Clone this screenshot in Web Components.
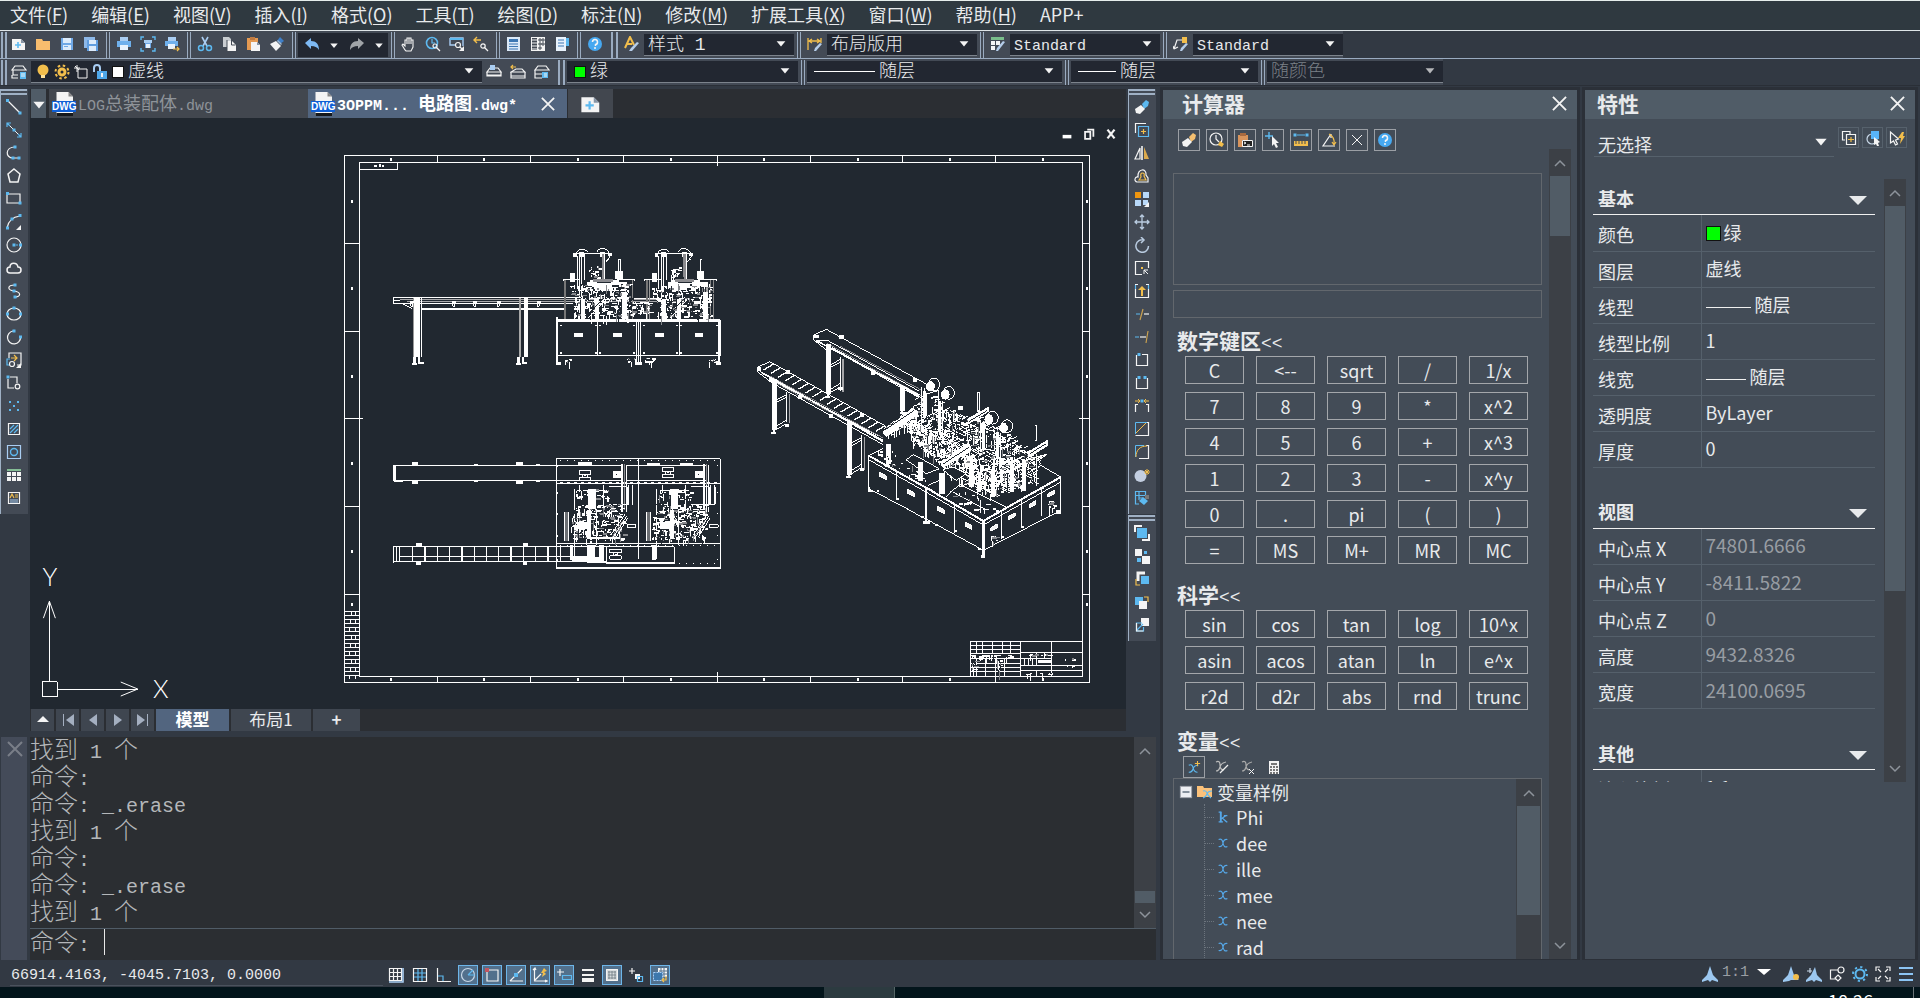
<!DOCTYPE html>
<html lang="zh-CN">
<head>
<meta charset="utf-8">
<title>3OPPM... 电路图.dwg</title>
<style>
html,body{margin:0;height:100%}
body{font-family:"Noto Sans CJK SC","Noto Sans",sans-serif;background:#323943;color:#e8eaec;overflow:hidden}
</style>
</head>
<body>
<cad-app></cad-app>
<script>
const W='#f4f4f4',B='#5db9f0',L='#a9cdf2',Y='#f2be4c',G='#8d939b';
const st=(d,c=W,w=1.2)=>`<path d="${d}" fill="none" stroke="${c}" stroke-width="${w}"/>`;
const fl=(d,c=W)=>`<path d="${d}" fill="${c}"/>`;
const bx=(x,y,w,h,c=W)=>`<rect x="${x}" y="${y}" width="${w}" height="${h}" fill="${c}"/>`;
const ci=(x,y,r,c=W,w=1.2)=>`<circle cx="${x}" cy="${y}" r="${r}" fill="none" stroke="${c}" stroke-width="${w}"/>`;
const dt=(x,y,c=B)=>bx(x-1.5,y-1.5,3,3,c);
const ICONS={
new:fl('M1 3h9l4 4v7H1z')+fl('M10 3v4h4z','#8795a5')+st('M7 6v6M4 9h6',B,1.6),
open:fl('M1 3h6l1 2h7v9H1z','#f8bd6e'),
save:fl('M2 2h12v12H2z','#6fa8e6')+bx(4,2,8,5,'#dcebfb')+bx(4,9,8,5,'#dcebfb')+bx(5,10,4,1,'#6fa8e6'),
saveall:fl('M1 1h11v11H1z','#8db8e8')+fl('M4 4h11v11H4z','#5f9de0')+bx(6,4,7,4,'#dcebfb')+bx(6,10,7,5,'#dcebfb'),
print:bx(4,1,8,4,L)+bx(1,5,14,6,'#6fb0ec')+bx(4,9,8,5,'#e8f2fc'),
preview:st('M1 4V1h3M12 1h3v3M15 12v3h-3M4 15H1v-3',B,1.4)+bx(4,4,8,3,L)+bx(5,7,6,5,'#6fa8e6')+bx(6,8,4,4,'#e8f2fc'),
plot:bx(4,1,8,4,L)+bx(1,5,13,5,'#6fb0ec')+bx(4,8,7,5,'#e8f2fc')+st('M9 13h6M13 11l2 2-2 2',Y),
cut:st('M5 1l5 9M11 1l-5 9',L,1.6)+ci(4,12,2.5,B,1.5)+ci(12,12,2.5,B,1.5),
copy:fl('M2 1h6l2 2v8H2z','#c8ccd0')+fl('M6 5h5l4 4v6H6z')+st('M6 4v11M10.500 5v4h4','#434a55',1),
paste:fl('M2 2h11v12H2z','#e59a52')+bx(5,1,5,3,'#c07a40')+fl('M6 6h6l3 3v6H6z')+fl('M12 6v3h3z','#8795a5'),
brush:fl('M11 1l4 4-4 3-3-3z','#3f7fc8')+fl('M7 5l5 5-5 5-6-7z')+fl('M8 5l4 4 1-1-4-4z','#a0b8d0'),
undo:fl('M1 6l6-5v3c5 0 8 3 8 9-2-3-4-4-8-4v3z','#7db9f4'),
redo:fl('M15 6L9 1v3C4 4 1 7 1 13c2-3 4-4 8-4v3z','#a0a4a8'),
down:fl('M3 6h10l-5 6z'),
up:fl('M2 10h12L8 4z'),
hand:st('M4 14L1 9l1-1 2 2V4h2v4V2h2v6V2h2v6V4h2v7l-2 4H5z',W,1.1),
zoomrt:ci(7,7,5.5,B,1.6)+st('M7 3v4h3',B)+ci(10,10,2,W)+st('M11 11l4 4'),
zoomwin:st('M1 2h13v8M1 2v7h5',L,1.4)+st('M1 3h13',B,2)+ci(9,9,2.5)+st('M11 11l2 2')+fl('M15 10v5h-5z'),
zoomprev:st('M1 4h7M4 1L1 4l3 3',Y,1.4)+ci(10,10,2.2)+st('M11 11l4 4'),
calc:bx(1,1,13,14,'#dbe9f7')+bx(3,3,9,3,'#3c77b3')+st('M3 8h9M3 10.500h9M3 13h9','#3c77b3',1.2),
design:bx(1,1,14,14)+bx(2,2,5,12,'#434a55')+st('M2 4h5M2 7h5M2 10h5M2 13h5',W,1)+st('M9 3h2v2H9zM12 3h2v2h-2zM9 7h2v2H9zM12 7h2v2h-2zM9 11h2v2H9z','#434a55',1),
props:bx(2,1,10,14,'#e8f2fc')+st('M4 4h6M4 7h6M4 10h6','#3c77b3',1.2)+bx(12,2,3,8,B),
help:`<circle cx="8" cy="8" r="7" fill="#46a8f0"/>`+st('M5.500 6a2.500 2.500 0 1 1 3 2.500V10M8 11v2',W,1.5),
tstyle:st('M1 12L6 1l4 8M3 8h5',Y,2)+fl('M15 7l-7 8H5l2-3 6-6z','#b5cdea'),
dstyle:st('M1 2v12M14 2v5M2 5h11M5 3L2 5l3 2M10 3l3 2-3 2',Y,1.3)+fl('M15 8l-6 7H7l1-3 5-5z','#b5cdea'),
tbstyle:bx(1,1,13,3,'#79bd8b')+bx(1,5,4,4)+bx(6,5,4,4)+bx(1,10,4,4)+fl('M15 6l-7 9H6l1-3 6-7z','#b5cdea'),
mlstyle:st('M1 13l3-9h5M1 13l-1-3M1 13l4-2')+bx(9,1,5,6,Y)+fl('M15 8l-6 7H7l1-3 5-5z','#b5cdea'),
layers:st('M4 2h8l3 4H1zM2 6v5h5M1 11v3h6')+bx(9,8,6,7,B)+st('M10 10h4M10 12h4',W,1),
layprev:st('M4 4h8l3 4H1zM1 8v4h14V8M1 11h14')+bx(4,1,5,5,L),
laymake:st('M6 5h6l3 3H1zM1 8v4h14V8M1 12v2h14v-2')+st('M1 3h5M3 1L1 3l2 2',Y),
laystate:st('M4 2h8l3 4H1zM1 6v4h7M1 10v4h7')+bx(8,8,6,6,B)+st('M10 10h3M10 12h3',W,1),
bulb:`<circle cx="8" cy="6" r="5.500" fill="${Y}"/>`+bx(6,11,4,3,'#ffe39a'),
sun:ci(8,8,3,Y,3)+`<circle cx="8" cy="8" r="6.500" fill="none" stroke="${Y}" stroke-width="2" stroke-dasharray="2.500 2.600"/>`,
vpf:st('M5 5h9v9H5zM4 1v7M1 4h6M2 2l4 4',W,1),
lock:st('M2 8V4a3 3 0 0 1 6 0v3',L,2)+bx(5,7,10,8,'#4fa8ea')+bx(9,9,2,4),
line:st('M2 2l12 12')+dt(1.5,1.5)+dt(14,14),
xline:st('M2 2l12 12',W,1)+dt(8,8)+st('M1 5V1h4M15 11v4h-4M1 1l3 3M15 15l-3-3',B),
pline:st('M9 2C-1 2-1 13 7 13h7')+dt(9,2)+dt(7,13)+dt(13,13),
polygon:st('M8 1l6 5-2 8H4L2 6z',W,1.5),
rect:st('M1 3h13v9H1z')+dt(1.5,2.5)+dt(14,12),
arc:st('M1 14C2 8 6 3 14 2')+dt(1.5,14)+dt(6,5)+dt(14,1.5)+fl('M15 11v5h-5z'),
circle:ci(8,8,7)+dt(8,8)+bx(10,7.5,2,1,B)+dt(14.5,8),
cloud:st('M4 13a3 3 0 0 1 0-6c0-5 7-5 8 0a3 3 0 0 1 0 6z',W,1.5),
spline:st('M9 2C1 2 1 7 8 8s8 6 0 6')+dt(9,2)+dt(8,8)+dt(9,14),
ellipse:`<ellipse cx="8" cy="8" rx="7" ry="6" fill="none" stroke="${W}" stroke-width="1.200"/>`+dt(8,2)+dt(1.5,8)+dt(14.5,8),
ellarc:st('M7 2a6.500 6.500 0 1 0 7.500 6')+dt(8,2)+dt(14.5,8),
insert:st('M3 6V1h12v12h-4')+st('M5 6h6M8 3l3 3-3 3',Y)+st('M4 7H1v6h3',B)+ci(6,12,2.5)+fl('M15 11v5h-5z'),
block:st('M4 2h7v6M2 4v9h6')+dt(2,2)+ci(11.5,11.5,2.3),
points:bx(3,3,2,2,B)+bx(11,3,2,2,B)+bx(7,7,2,2,B)+bx(3,11,2,2,B)+bx(11,11,2,2,B),
hatch:st('M2.500 2.500h11v11h-11z')+st('M4 8l4-4M4 12l8-8M8 12l4-4',B,1.2),
region:st('M1.500 1.500h13v13h-13z',L,1.2)+ci(8,8,3.5,B,1.4),
table:bx(1,2,14,2,'#85bd95')+[1,6,11].map(x=>bx(x,5,4,4)+bx(x,10,4,4)).join(''),
mtext:st('M2.500 2.500h11v11h-11z')+st('M4 8l2-4 2 4M9 5h3M9 7h3',Y)+st('M4 10h8M4 12h8',L,1),
erase:fl('M8 5l4-4 3 2-1 4-4 3z',B)+fl('M7 6l4 4-5 5-4-1-1-4z'),
eraseY:fl('M8 5l4-4 3 2-1 4-4 3z','#f4bf70')+fl('M7 6l4 4-5 5-4-1-1-4z'),
copyobj:st('M1.500 11V1.500H12')+st('M4.500 4.500h10v10h-10z',B)+st('M9.500 7v5M7 9.500h5',Y),
mirror:st('M6 3L1 14h5z')+st('M8 1v14',W,1.6)+fl('M10 2l5 12h-5z','#dba94d'),
offset:st('M3 14a2.500 2.500 0 0 1 1-5C3 0 13 0 12 7l2 3v4z')+st('M5 12l2-3q-1-4 1.500-4T10 8l2 4z',Y),
array:bx(1,1,6,6,'#f0960f')+bx(9,1,6,6,'#b8d8f8')+bx(1,9,6,6,'#b8d8f8')+bx(9,9,5,5,'#b8d8f8')+fl('M15 11v5h-5z'),
move:st('M8 1v14M1 8h14M6 3l2-2 2 2M6 13l2 2 2-2M3 6L1 8l2 2M13 6l2 2-2 2','#b9cbe0',1.3),
rotate:st('M10 3a6.300 6.300 0 1 0 4.500 6M7 0l3 3-3 3','#b9cbe0',1.5),
scale:st('M14.500 8V1.500h-13v13H8')+bx(7,7,2,2,Y)+st('M10 10l4 4M14 10h-4v4',W,1),
stretch:st('M1.500 6v8.500h13V6M1 1.500h3M12 1.500h3')+st('M1.500 2v4M14.500 2v4',B)+fl('M8 3l4 4H9v6H7V7H4z',Y),
trim:st('M9 3L6 14','#c8a050',1.2)+st('M10 8h5')+st('M2 8h4',B,1),
extend:st('M14 2l-2 12','#c8a050',1.2)+st('M6 8h6')+st('M1 8h4',B,1),
brkpt:st('M2.500 3v10.500h11V2.500H8')+dt(5,2.5),
brk:st('M2.500 3v10.500h11V3')+dt(5,2.5)+dt(11,2.5),
join:st('M1.500 14V6.500H4M14.500 14V6.500H12')+st('M1 3h5M4 1l2 2-2 2M15 3h-5M12 1l-2 2 2 2',Y,1)+dt(8,3),
chamfer:st('M1.500 14.500h13V1.500H12')+st('M1.500 13V1.500H13',B,1)+st('M2 12L12 2',Y,1),
fillet:st('M5 14.500h9.500V1.500H12')+st('M1.500 13V1.500H10',B,1)+st('M2 13C2 6 6 2 13 2',Y,1),
explode:`<circle cx="6.500" cy="9" r="6" fill="#c3cee0"/>`+st('M13 2v6M10 5h6M11 3l4 4M15 3l-4 4',Y,1),
match:st('M1.500 1.500h10v4h-10zM1.500 5v9H5M5 1v9M5 8h4',B)+fl('M9 7l5 4-4 4-5-4z',B)+bx(11,5,4,4,'#777'),
front:st('M1 7V1h7M15 9v6H8',W,2)+bx(3,3,10,10,B),
back:bx(1,1,7,7)+bx(8,8,8,8)+bx(10,3,3,3,B)+bx(3,10,4,4,B),
above:st('M4 10V2h7',W,3)+bx(7,5,8,8,B)+st('M2 8v6h4',Y),
below:bx(1,3,8,8,B)+bx(5,7,8,8)+st('M10 3h4v5',Y),
hatchb:bx(7,1,8,8)+st('M8 6H2.500v8h7v-4M3 13l6-6',B)+st('M2.500 6v8h7',W),
clock:ci(7,7,6)+st('M7 3v4l3 3')+fl('M11 9l4 3-2 3-4-2z',Y),
pastecmd:fl('M1 3h10v12H1z','#d8945c')+bx(3,1,6,3,'#a86a40')+bx(5,8,11,6,'#222')+st('M5.500 8.500h10v6h-10zM7 10l2 1-2 1M10 13h3',W,1),
pick:st('M4 0v7M0 4h8',B,1.4)+fl('M7 4l7 7H11l2 4-2 1-2-4-2 2z'),
ruler:bx(1,9,14,5,Y)+st('M3 9v3M6 9v3M9 9v3M12 9v3','#434a55',1)+dt(2,3)+dt(14,3)+st('M4 3h8',B,1),
angle:st('M10 2L2 14h12M10 2v4')+st('M8 2q6 3 5 10M11 10l2 3 2-3',Y),
cross:st('M3 3l10 10M13 3L3 13',W,1),
varnew:st('M2 6q4-2 5 3t5 5M13 6q-5 0-6 4t-5 4',B,1.3)+st('M12 1v6M9 4h6',Y),
varedit:st('M2 3q4-2 4 3t4 5M12 3Q7 4 6 8t-4 4','#bbb')+st('M14 6l-8 8','#eee'),
vardel:st('M2 3q4-2 4 3t4 5M12 3Q7 4 6 8t-4 4','#aaa')+st('M9 10l5 5M14 10l-5 5',W,1),
vcalc:bx(3,2,10,13)+bx(5,4,6,2,'#777')+[5,8,11].map(y=>bx(4,y+2,2,2,'#777')+bx(7,y+2,2,2,'#777')+bx(10,y+2,2,2,'#777')).join(''),
folder:fl('M0 2h6l1 2h8v9H0z','#fbc17a')+st('M6 7q3-1 4 2t4 5M15 7q-4 0-5 3t-4 4',B,1.2),
vx:st('M3 4q4-2 5 4t5 4M13 4Q9 3 8 8t-5 4','#56a8e8',1.3),
vk:st('M5.500 2v12','#56a8e8',2.2)+st('M3 13.500h5M3 2.500h3M12 6l-6 4M7 9l5 4.500h1M9 6.500h4','#56a8e8',1.5),
minus:`<rect x="1.500" y="1.500" width="13" height="13" fill="#eceef2" stroke="#9a9ea6"/>`+st('M4 8h8','#456',1.4),
chup:st('M3 11l5-5 5 5',G,1.5), chdn:st('M3 5l5 5 5-5',G,1.5),
close:st('M1 1l14 14M15 1L1 15',W,2),
dwg:fl('M3 0h8l3 3v13H3z')+bx(3,14,11,2,'#15181c')+fl('M11 0v3h3z','#888'),
first:fl('M14 2v12L6 8z','#a4afc0')+bx(3,2,1,12,'#a4afc0'), prev:fl('M12 2v12L4 8z','#a4afc0'),
next:fl('M4 2v12l8-6z','#a4afc0'), last:fl('M2 2v12l8-6z','#a4afc0')+bx(12,2,1,12,'#a4afc0'),
min:bx(3,9,10,4,'#fff'), restore:st('M6 3h7v8M3.500 5.500h6v8h-6z',W,2), x:st('M4 3l8 10M12 3L4 13',W,2.6),
snap:st('M1.500 1.500h12v12h-12zM5.500 1v13M9.500 1v13M1 5.500h13M1 9.500h13')+st('M15 1v14H1',L,1.6),
grid:st('M1.500 1.500h13v13h-13z')+st('M6 2v12M10 2v12M2 6h12M2 10h12',B),
ortho:st('M1.500 1v13.500H15')+st('M2 9h5v5',B),
polar:ci(8,8,6.500,'#c8d8e8')+st('M8 8h7M8 8l5-5',B),
osnap:st('M3 3h11v11H3z')+bx(1,1,4,4,'#c25560'),
otrack:st('M2 14h13M2 14L14 2')+bx(6,6,4,4,B),
dyn:st('M2.500 1v13H15M1 3l2-2 1 2M13 13l2 1-2 1M3 13l6-6')+fl('M12 1l3 3-3 1 2 2-4 3 1-4H9z',Y),
dynin:st('M4 2v7M1 5h7')+st('M6.500 8.500h9v4h-9z',B),
lwt:bx(2,2,12,2)+bx(2,7,12,2)+bx(2,11,12,4),
trans:bx(2,2,12,12,'#d8dcde')+st('M2.500 2.500h11v11h-11z',W,1)+st('M4 5h8M4 8h8M4 11h8M5 4v8M8 4v8M11 4v8','#6d7880',.8),
cycle:st('M4 1v6M1 4h6')+bx(7,7,5,5)+st('M9.500 9.500h5v5h-5z',B),
quick:bx(6,1,9,9)+st('M7 4h8M7 7h8M9 1v9M12 1v9','#52708c',1)+bx(1,5,10,9,'#3d78ad')+`<rect x="1.500" y="5.500" width="9" height="8" fill="none" stroke="${L}" stroke-dasharray="2 1"/>`+st('M14 9v4h-4M12 11l-2 2 2 2',Y),
ann:fl('M8 0l3 9 5 5v2l-6-2-2 2-2-2-6 2v-2l5-5z','#9cc8f0'),
annv:fl('M8 0l3 9 5 5-8 0-2 1-6 1v-2l5-5z','#9cc8f0')+`<circle cx="13" cy="11" r="3" fill="${Y}"/>`,
anna:fl('M9 1l2 8 5 5v2l-6-2-2 2-2-2-6 2v-2l5-5z','#9cc8f0')+st('M1 5h5M4 2v5','#c8d8e8'),
work:st('M9 4H1.500v9H7')+ci(12,4,3)+st('M9 9l3 3-3 3-3-3z'),
gear:ci(8,8,4.500,B,2)+`<circle cx="8" cy="8" r="7" fill="none" stroke="${B}" stroke-width="2" stroke-dasharray="2.200 3.300"/>`,
full:st('M1 5V1h4M11 1h4v4M15 11v4h-4M5 15H1v-4M3 3l3 3M13 3l-3 3M3 13l3-3M13 13l-3-3'),
burger:bx(1,1,14,2,'#8cc4f4')+bx(1,7,14,2,'#8cc4f4')+bx(1,13,14,2,'#8cc4f4'),
qsel:st('M9 5V1.500H1.500V10H4')+st('M5.500 4.500h9v10h-9z')+st('M10 7v5M7 9.500h6',Y),
psel:ci(7,9,5,'#c8d8e8')+bx(6,1,8,8,'#58b4fa')+fl('M9 7l6 5-2 1 1 3h-2l-1-2-2 1z'),
tog:st('M1.500 2v11l3-2 2 4 2-1-2-4 3-1z')+fl('M13 2l2 0-1 4h2l-5 8 1-6H9z',Y)
};
const define=(name,css,html)=>customElements.define(name,class extends HTMLElement{
  connectedCallback(){
    if(this.shadowRoot)return;
    this.attachShadow({mode:'open'}).innerHTML=`<style>*{box-sizing:border-box}button,select,input{font:inherit;color:inherit;background:none;border:0;padding:0;margin:0;border-radius:0;outline:0}a{color:inherit;text-decoration:none}${css}</style>${typeof html==='function'?html(this):html}`;
  }
});
/* Half-width runs are set smaller so that two of them fill one ideograph. */
const mix=t=>t.replace(/[\x20-\x7e]+/g,m=>`<span class="m">${m.replace('<','&lt;')}</span>`);
const ic=(n,s=16)=>`<cad-icon name="${n}" size="${s}"></cad-icon>`;
const tb=(n,l)=>`<tool-button label="${l}">${ic(n)}</tool-button>`;

define('cad-icon',':host{display:inline-flex;flex:none}svg{display:block}',e=>{
  const s=e.getAttribute('size')||16;
  return `<svg width="${s}" height="${s}" viewBox="0 0 16 16" aria-hidden="true">${ICONS[e.getAttribute('name')]}</svg>`;
});
define('tool-button',`:host{display:flex;width:24px;height:23px}
button{flex:1;display:flex;align-items:center;justify-content:center}
:host([on]) button{background:#52708c;border:1px solid #6db6ea}`,
e=>`<button aria-label="${e.getAttribute('label')}"><slot></slot></button>`);
define('bar-sep',`:host{display:block;width:9px;align-self:stretch;flex:none;padding:1px 0 0 3px}
i{display:block;width:4px;height:100%;border:solid #9aabc0;border-width:0 1px}
:host([big]){width:13px;padding-left:4px}:host([big]) i{width:7px;border-width:0 2px}
:host([start]){width:7px;padding-left:1px}:host([start]) i{width:6px;border-width:0 2px}`,'<i></i>');
define('scroll-bar',`:host{display:flex;flex-direction:column;width:22px;background:#3c4046;flex:none;align-items:center}
div{flex:1;width:100%;display:flex;flex-direction:column;padding:0 1px;min-height:0}
i{display:block;background:#515c66;flex:0 0 var(--thumb)}b{flex:0 0 var(--before,0px)}
button{height:27px;width:100%;display:flex;align-items:center;justify-content:center;flex:none}`,
`<button aria-label="向上">${ic('chup')}</button><div><b></b><i></i></div><button aria-label="向下">${ic('chdn')}</button>`);
define('combo-box',`:host{display:flex;align-items:center;height:22px;background:#222731;border-bottom:1px solid #7c838c;font-size:18px;line-height:20px;position:relative;flex:none}
select{appearance:none;flex:1;min-width:0;height:21px;line-height:21px;font-family:"Liberation Mono","Noto Sans CJK SC",monospace;font-weight:300;padding:1px 0 0 4px}
:host([latin]) select{font-size:15px;padding-top:2px}:host([dim]) select{color:#7b8087}:host([dim]) cad-icon{opacity:.7}
option{background:#222731}
.a{position:absolute;right:6px;top:2px;pointer-events:none;line-height:0}`,
e=>`<slot></slot><select aria-label="${e.getAttribute('label')}"><option>${e.getAttribute('value')}</option></select><span class="a">${ic('down',14)}</span>`);

define('menu-bar',`:host{display:block;background:#2f3940;border-top:1px solid #e6eeec;border-bottom:1px solid #dfe5e8}
nav{display:flex;gap:23px;height:29px;padding:0 0 3px 10px;align-items:center;font-size:18px;line-height:26px}
a{white-space:nowrap}u{text-underline-offset:2px}`,
`<nav>${['文件(F)','编辑(E)','视图(V)','插入(I)','格式(O)','工具(T)','绘图(D)','标注(N)','修改(M)','扩展工具(X)','窗口(W)','帮助(H)','APP+'].map(t=>`<a href="#">${t.replace(/\((.)\)/,'(<u>$1</u>)')}</a>`).join('')}</nav>`);

const combo=(l,v,extra='',slot='')=>`<combo-box label="${l}" value="${v}" ${extra}>${slot}</combo-box>`;
define('std-toolbars',`:host{display:block}
.r{display:flex;align-items:center;width:max-content;background:#434a55}
.o{background:#323943}.one{border-bottom:1px solid #9aabc0}
.one .r{height:27px}.two .r{height:26px}
.u{display:flex;background:#222731;width:90px;height:24px;align-items:center}
.u tool-button{width:27px}.u .d{width:18px}
.one tool-button{height:21px;margin-bottom:2px}.u tool-button{margin:0}
.one combo-box{width:150px}.sw{width:12px;height:12px;border:1px solid #111;flex:none}
.ln{height:1px;background:#fff;flex:none;margin-left:7px}
.ly{width:451px}.ly cad-icon{margin-left:3px}.ly cad-icon:first-child{margin-left:4px}
.cl{width:231px}.lt{width:255px}.lw{width:187px}.ps{width:176px}`,
`<div class="o one"><div class="r"><bar-sep start></bar-sep>${tb('new','新建')+tb('open','打开')+tb('save','保存')+tb('saveall','全部保存')}<bar-sep></bar-sep>${tb('print','打印')+tb('preview','预览')+tb('plot','发布')}<bar-sep></bar-sep>${tb('cut','剪切')+tb('copy','复制')+tb('paste','粘贴')+tb('brush','格式刷')}<bar-sep></bar-sep><div class="u">${tb('undo','放弃')}<tool-button class="d" label="放弃列表">${ic('down',12)}</tool-button>${tb('redo','重做')}<tool-button class="d" label="重做列表">${ic('down',12)}</tool-button></div><bar-sep></bar-sep>${tb('hand','平移')+tb('zoomrt','实时缩放')+tb('zoomwin','窗口缩放')+tb('zoomprev','缩放上一个')}<bar-sep></bar-sep>${tb('calc','计算器')+tb('design','设计中心')+tb('props','特性')}<bar-sep></bar-sep>${tb('help','帮助')}<bar-sep big></bar-sep>${tb('tstyle','文字样式')+combo('文字样式','样式 1')}<bar-sep></bar-sep>${tb('dstyle','标注样式')+combo('标注样式','布局版用')}<bar-sep></bar-sep>${tb('tbstyle','表格样式')+combo('表格样式','Standard','latin')}<bar-sep></bar-sep>${tb('mlstyle','引线样式')+combo('引线样式','Standard','latin')}</div></div>
<div class="o two"><div class="r"><bar-sep start></bar-sep>${tb('layers','图层特性')}${combo('图层','虚线','class="ly"',ic('bulb')+ic('sun')+ic('vpf')+ic('lock')+'<span class="sw" style="background:#fff;margin-left:4px"></span>')}${tb('layprev','图层置为当前')+tb('laymake','上一图层')+tb('laystate','图层状态')}<bar-sep big></bar-sep>${combo('颜色','绿','class="cl"','<span class="sw" style="background:#0f0;margin-left:7px"></span>')}<bar-sep></bar-sep>${combo('线型','随层','class="lt"','<span class="ln" style="width:61px"></span>')}<bar-sep></bar-sep>${combo('线宽','随层','class="lw"','<span class="ln" style="width:38px"></span>')}<bar-sep></bar-sep>${combo('打印样式','随颜色','class="ps" dim')}</div></div>`);

define('side-bar',`:host{display:block;width:28px;flex:none}
section{background:#434a55;border-left:1px solid #9fb0c4;padding-bottom:5px;margin-bottom:1px}
.g{height:6px;border:solid #9fb0c4;border-width:2px 0;margin-right:1px}
tool-button{width:25px}`,
e=>e.getAttribute('sets').split('|').map(s=>`<section><div class="g"></div>${s.split(' ').map(n=>tb(n,n)).join('')}</section>`).join(''));

define('doc-tabs',`:host{display:flex;height:29px;background:#2b2e33;padding-left:1px;font-size:18px;line-height:26px}
.m{font-family:"Liberation Mono",monospace;font-size:15px;white-space:pre}
.l{width:15px;background:#505c67;margin-right:3px;display:flex;align-items:center;justify-content:center}
.t{width:259px;background:#42474f;color:#8e9399;display:flex;align-items:center;padding-left:3px}
.t>span:last-of-type{height:30px}
.t.on{background:#52657f;color:#fff;font-weight:700}.n{width:45px;background:#42474f;margin-left:1px;display:flex;align-items:center;justify-content:center}
.d{position:relative;display:flex;width:24px;margin-right:2px;justify-content:center}
.d b{position:absolute;left:0;right:0;top:9px;height:11px;background:#0f5fd6;color:#fff;font:700 10px/11px "Liberation Sans",sans-serif;text-align:center}
.c{margin-left:auto;width:38px;height:27px;display:flex;align-items:center;justify-content:center}`,
`<button class="l" aria-label="文档列表">${ic('down',18)}</button>
<div class="t"><span class="d">${ic('dwg',24)}<b>DWG</b></span><span>${mix('LOG总装配体.dwg')}</span></div>
<div class="t on"><span class="d">${ic('dwg',24)}<b>DWG</b></span><span>${mix('3OPPM... 电路图.dwg*')}</span><button class="c" aria-label="关闭">${ic('close',14)}</button></div>
<button class="n" aria-label="新建">${ic('new',22)}</button>`);

/* ---- drawing ---- */
function rng(s){return()=>(s=(s*1664525+1013904223)>>>0)/4294967296}
function inside(p,x,y){let r=false;for(let i=0,j=p.length-1;i<p.length;j=i++){const[a,b]=p[i],[c,d]=p[j];if((b>y)!=(d>y)&&x<(c-a)*(y-b)/(d-b)+a)r=!r}return r}
const box=(x,y,w,h)=>[[x,y],[x+w,y],[x+w,y+h],[x,y+h]];
/* Scatter of small machine parts within a polygon, on a 3-unit grid. */
function parts(seed,poly,n,iso){
  const r=rng(seed),xs=poly.map(p=>p[0]),ys=poly.map(p=>p[1]),x0=Math.min(...xs),x1=Math.max(...xs),y0=Math.min(...ys),y1=Math.max(...ys);
  const out={w:'',g:'',k:'',s:''};let c=0,guard=0;
  while(c<n&&guard++<n*20){
    const x=Math.round((x0+r()*(x1-x0))/3)*3,y=Math.round((y0+r()*(y1-y0))/3)*3;
    if(!inside(poly,x,y))continue;c++;
    const k=r(),v=r();
    if(iso&&v<.4){const l=6+r()*20,u=r()<.5?.55:-.5;out.s+=`M${x} ${y}l${l|0} ${(l*u)|0}`;continue}
    const w=3*(1+(r()*(v<.7?5:1)|0)),h=3*(1+(r()*(v<.7?2:9)|0));
    out[k<.66?'w':k<.8?'g':'k']+=`M${x} ${y}h${w}v${h}h${-w}z`;
  }
  return `<path d="${out.s}"/><path d="${out.w}" fill="#fff" stroke="none"/><path d="${out.g}" fill="#85878b" stroke="none"/><path d="${out.k}" fill="#212830" stroke="none"/>`;
}
const R=(x,y,w,h,c='#fff')=>`<rect x="${x}" y="${y}" width="${w}" height="${h}" fill="${c}" stroke="none"/>`;
const P=(d,c='')=>`<path d="${d}"${c?` stroke="${c}"`:''}/>`;
function front(){
  let o=P('M160 455H722M180 474H700M160 455V474L185 474L215 488M160 463H180')+R(245,486,427,6)+P('M180 461H950M200 468H950','#a8a8ab')+P('M720 458H950');
  for(const[x,f]of[[218,0],[530,1]]){o+=R(x,458,2,176,'#999')+R(f?x+22:x+4,458,f?12:16,176)+R(x+25,458,3,176)+(f?R(x+8,458,6,176,'#a8a8a8'):'')+R(x+1,634,9,22)+R(x+16,634,6,20)+R(x-3,652,15,7)+R(x+20,650,12,6)}
  for(const x of[210,335,398,470,590])o+=R(x,466,12,6)+P(`M${x+2} 476v6h6v-6`);
  o+=P('M650 524H1141V631H650z')+R(648,520,494,8)+R(648,513,7,144)+R(1135,524,7,130)+P('M772 526V631M889 526V650M895 526V650M901 526V650M1018 526V631');
  for(const x of[702,819,945,1065])o+=R(x,561,26,12);
  for(const x of[660,764,776,880,908,1010,1022,1128])o+=R(x,538,6,4)+R(x,618,6,8);
  for(const x of[648,884,892,1129])o+=R(x,648,14,9);
  for(const x of[670,858,915,1103])o+=parts(x,box(x,634,20,14),26);
  for(const d of[0,245]){
    const s=d+9;
    o+=`<g transform="translate(${d} 0)">`+R(672,400,6,121,'#777')+R(683,400,2,121,'#999')+R(866,400,2,121,'#888')+R(876,400,3,121,'#888')+R(855,410,4,112,'#aaa')
    +P('M703 322H808M707 330A20 20 0 0 1 744 320M770 320A20 20 0 0 1 808 330')+R(700,322,10,12)+R(717,318,15,16)+R(781,318,15,16)+R(803,323,13,8)
    +P('M712 330V430M720 330V521M726 330V440M735 325V404M795 330V425')+R(786,325,7,100,'#8b8b8f')+P('M797 350L810 332M800 345L808 340')
    +parts(s+1,box(745,360,30,35),22)+R(835,340,8,62)+R(838,343,3,56,'#212830')+R(826,375,22,26)
    +R(690,382,16,26)+P('M670 402H720M670 399V406M830 402H884M884 399V406M836 380V400')
    +R(750,402,86,34)+R(740,410,120,14)+R(760,400,58,10,'#8b8b8f')+R(770,408,42,3,'#212830')
    +parts(s+2,box(690,412,180,48),170)+parts(s+3,box(700,455,170,58),180)
    +R(722,460,12,60)+R(766,460,12,60)+R(846,440,14,80)+P('M738 512L790 458','#212830')+P('M744 518L796 464')+`</g>`;
  }
  return o+parts(31,box(870,466,60,36),50);
}
function plan(){
  let o=P('M160 961H850M170 1006H850M160 958V1008')+R(160,958,8,51)+R(160,1004,28,6)+R(160,958,24,5);
  for(const x of[214,528])o+=R(x,950,20,10)+R(x,1008,20,8);
  for(const x of[400,588])o+=R(x,956,12,5)+R(x,1006,12,5);
  o+=P('M158 1204H800M158 1249H800M160 1202V1252M168 1204V1249M178 1204V1249')+R(180,1231,580,5);
  for(let x=217;x<700;x+=37)o+=R(x-2,1204,4,46);
  for(const x of[228,548])o+=R(x,1192,17,12)+R(x,1250,14,9);
  o+=P('M649 940H1141V1270H649zM895 940V1240M649 1014H1141M649 1194H1141M649 1268H1141M862 961H1100M862 1006H1100');
  for(let x=660;x<1140;x+=21)o+=R(x,944,3,3)+R(x,1011,9,4)+R(x,1198,4,3)+(x>1000?R(x,1252,3,3):'');
  for(const y of[960,1040,1104,1170,1240])o+=R(652,y,3,6)+R(1132,y,3,3);
  for(const[x,y]of[[718,976],[967,967],[810,1212]])o+=P(`M${x} ${y}h34v10h-34zM${x} ${y+20}h34v10h-34zM${x+10} ${y+10}v10M${x+24} ${y+10}v10M${x+14} ${y+15}h6`);
  o+=R(715,950,40,10)+R(920,952,40,8)+R(1020,952,40,8);
  for(const d of[0,247]){
    o+=`<g transform="translate(${d} 0)">`+R(844,955,6,150)+R(852,955,3,150,'#8b8b8f')+R(858,960,4,140)+R(820,978,22,20)+R(828,985,4,4,'#212830')+P('M704 1030V1240M712 1034H800M720 1020V1040M790 1020V1100M806 1024H862V1078H806')
    +parts(41+d,box(706,1030,100,34),60)+parts(42+d,box(700,1076,150,36),100)+parts(43+d,box(690,1110,85,76),160)+parts(44+d,box(775,1100,75,86),90)
    +R(745,1030,24,62)+R(768,1090,3,110)+R(712,1130,36,22)+R(742,1095,12,86)+R(674,1100,12,88,'#6d7074')+P('M674 1100V1188M686 1100V1188M865 1020V1078M877 1020V1078')
    +P('M812 1170L856 1106M820 1176L860 1112M828 1176L864 1118')+P('M816 1176L848 1126','#8b8b8f')+P('M862 1138H888V1146H862z')+R(690,1198,10,45)+`</g>`;
  }
  return o+R(740,1198,24,50)+R(778,1198,14,50)+R(700,1236,80,10)+R(750,1176,90,6)+P('M800 1204H1003V1256H800z')+P('M740 1252H1003M1100 1018V1100M1110 1024V1076H1126V1024');
}
function iso(){
  let o=P('M223 103L260 86L300 108L560 250M228 118L265 120L540 272M250 130L540 292M276 140L560 300M223 103V118L262 150')+P('M262 128L545 285M300 136L545 268','#8b8b8f')+P('M305 158L430 226');
  for(const[x,y]of[[223,102],[298,103],[394,212],[520,233],[656,316]])o+=R(x,y,14,11);
  o+=P('M54 200L90 183L440 378M60 212L430 424M100 240L420 408M95 246L430 432M54 200V214L95 246')+P('M90 226L430 412M110 248L300 350','#8b8b8f');
  o+='<g stroke-width="5">'+P('M66 216L430 420M230 120L540 284')+'</g><g stroke-width="4">';
  for(let i=0;i<17;i++){const x=72+i*21,y=208+i*11.6;o+=P(`M${x|0} ${y|0}L${(x+30)|0} ${(y-18)|0}`)}
  o+='</g>';
  for(const[x,y]of[[52,200],[140,208],[175,284],[268,340],[362,338],[88,232]])o+=R(x,y,12,12);
  for(const[x,y,h,dx,dh]of[[258,130,150,42,100],[97,235,155,42,90],[322,365,158,42,100],[440,432,58,12,30],[483,255,75,8,40]]){
    o+=R(x,y,15,h)+R(x+3,y+h,6,8)+R(x-2,y+h+5,15,6);
    if(dx>20)o+=R(x+dx,y+40,4,dh)+R(x+dx+8,y+44,5,dh,'#a5a5a8')+P(`M${x+15} ${y+62}L${x+dx} ${y+48}M${x+15} ${y+70}L${x+dx} ${y+56}M${x+15} ${y+h-14}L${x+dx} ${y+h-30}M${x+15} ${y+h-4}L${x+dx} ${y+h-20}`)+R(x+dx-4,y+h-20,14,9);
  }
  o+=P('M388 465L430 445M388 465V570M388 465L560 560L732 660L965 530L900 492M732 660V750M560 560V655M965 530V632M390 568L560 656L732 750L965 630M472 513V598M646 612V698M788 630V716M848 598V680M908 565V646M560 650V668M388 478L560 575L732 674L965 545')
   +`<path d="M390 467L560 562L732 662L963 531" stroke-width="6"/>`+R(384,560,8,14)+R(556,560,8,112)+R(552,662,20,10)+R(728,660,9,108)+R(726,764,12,8)+R(386,568,14,6)+R(950,628,16,12);
  for(const[x,y]of[[420,516],[504,567],[594,618],[678,666]])o+=fl(`M${x} ${y}l20 10v12l-20 -10z`);
  for(const[x,y]of[[754,682],[808,648],[870,612],[926,580]])o+=fl(`M${x} ${y}l20 -11v11l-20 11z`);
  o+=parts(61,box(753,704,16,20),22)+parts(62,box(926,602,16,22),22);
  for(const[x,y]of[[546,646],[588,672],[716,744],[470,592],[646,690],[786,706],[846,676],[412,570],[770,628],[906,560]])o+=R(x,y,8,6);
  o+=parts(71,[[500,380],[530,290],[560,275],[640,325],[680,350],[720,350],[800,400],[870,460],[910,465],[900,480],[880,545],[850,562],[740,585],[690,560],[610,500],[520,420]],1300,1);
  o+=parts(72,[[430,385],[520,320],[535,330],[530,360],[440,408]],160,1)+parts(73,[[490,370],[560,380],[650,430],[700,470],[690,500],[600,480],[520,430]],420,1)+parts(74,[[680,500],[820,480],[830,565],[740,585]],200,1);
  o+=fl('M430 395L520 322L536 340L440 408z','#fff')+P('M436 388L524 330','#212830')+fl('M606 486L690 432L696 450L612 500z','#fff')+P('M612 490L690 440','#212830')+fl('M522 462L600 505L560 520L500 478z','#212830')+fl('M610 508L640 500L680 520L650 540z','#212830')+fl('M562 280l36 -10v62l-36 16z','#212830')+fl('M737 385l30 8v58l-30 -6z','#212830')
    +parts(75,box(568,285,26,50),14)+parts(76,box(740,392,24,50),14);
  for(const[x,y]of[[578,252],[622,277],[754,352],[798,377]])o+=`<ellipse cx="${x+6}" cy="${y}" rx="17" ry="19"/><ellipse cx="${x-5}" cy="${y+5}" rx="12" ry="14" fill="#fff"/>`;
  o+=P('M546 260V350M556 262V352M600 300V400M608 300V400M724 360V450M734 362V452M776 395V495M784 400V495M850 480V572M860 480V572M892 460V556')+R(550,270,10,80)+R(596,300,10,96)+R(728,365,9,85)+R(770,395,9,80)+R(848,480,11,92)+R(690,505,14,54)+R(716,515,8,60)+R(754,510,12,80)+R(812,490,12,84)+R(536,485,14,58)+R(598,518,18,64)
   +R(713,275,9,60)+R(716,278,3,50,'#212830')+R(886,373,7,50)+R(888,376,2,44,'#212830')
   +fl('M684 356L748 320V332L690 368z','#fff')+fl('M866 456L924 420V436L870 470z','#fff')+P('M690 362L744 330M872 460L920 430','#212830')+P('M870 474L924 462L890 484');
  return o+P('M620 590L660 552L800 620M660 560L690 548M566 555L600 540M545 552L590 576M640 575L740 628')+parts(81,[[640,560],[720,590],[780,620],[745,650],[620,590]],30)+parts(82,[[400,455],[440,440],[520,490],[560,540],[545,550]],30);
}
function block(){
  let o=P('M694 1129V1024H1031M844 1024V1129M938 1024V1129M844 1057H1031M844 1075H938M844 1097H1031M844 1111H1031M694 1036H844M694 1048H844M694 1060H844M694 1075H844M694 1090H844M694 1102H844M694 1115H844M712 1024V1060M730 1024V1060M760 1024V1060M790 1024V1060M814 1024V1060M712 1075V1129M740 1075V1129M768 1075V1129M796 1075V1129M892 1057V1097M892 1111V1129M916 1057V1075M855 1075V1095M868 1075V1095M880 1075V1095');
  return o+parts(91,box(696,1063,142,6),40)+parts(92,box(698,1076,12,32),12)+parts(93,box(772,1076,12,40),14)+parts(94,box(862,1062,66,6),14)+R(896,1080,40,8)+parts(95,box(976,1072,26,8),10)+parts(96,box(976,1098,26,4),8)+parts(97,box(850,1117,96,4),12);
}
function frame(){
  let d='M344.500 154.500H1090.500V682.500H344.500zM359.500 161.500H1083.500V676.500H359.500zM359.500 168.500H397.500V161.500';
  [437,530,623,717,810,903,996].forEach((x,i)=>d+=`M${x+.5} 154V${i==3?165:161}M${x+.5} ${i==3?672:676}V682`);
  [242,330,418,506,594].forEach((y,i)=>d+=`M344 ${y+.5}H${i==2?363:359}M${i==2?1080:1083} ${y+.5}H1090`);
  for(let y=611;y<676;y+=4)d+=`M344 ${y+.5}H359`+((y-611)%8?'':`M${349+(y%3)} ${y}v4M355.500 ${y}v4`);
  let o=P(d);
  [390,483,577,670,763,857,950,1043].forEach(x=>o+=R(x,157,2,3)+R(x,678,2,3));
  [199,286,374,462,550,603].forEach(y=>o+=R(351,y,2,3)+R(1087,y,2,3));
  return o+R(374,164,3,2)+R(379,163,2,3)+R(382,164,2,2);
}
define('drawing-view',`:host{display:block;flex:1;min-height:0;background:#212830;position:relative;overflow:hidden}
svg{display:block;width:100%;height:100%}
div{position:absolute;right:8px;top:9px;display:flex;gap:8px}button{width:14px;height:14px;display:flex}`,
`<svg viewBox="30 117 1096 592" fill="none" stroke="#fff" shape-rendering="crispEdges" role="img" aria-label="图纸">
${frame()}
<g transform="translate(340 145) scale(.333333)" stroke-width="3">${front()}${plan()}</g>
<g transform="translate(740 300) scale(.333333)" stroke-width="3">${iso()}${block()}</g>
<path d="M48.500 681V601M41.500 681.500h15v15h-15zM57 689.500h80"/><path shape-rendering="auto" d="M42.500 618l6-17 6 17M120 682l17 7-17 7"/>
<g fill="#fff" stroke="none" font-family="Lato,sans-serif" font-weight="300" font-size="25" text-anchor="middle"><text x="49" y="586">Y</text><text x="160" y="698">X</text></g>
</svg><div><button aria-label="最小化">${ic('min',14)}</button><button aria-label="还原">${ic('restore',14)}</button><button aria-label="关闭">${ic('x',14)}</button></div>`);

define('layout-tabs',`:host{display:flex;gap:2px;height:22px;background:#2b2e33;padding-left:1px;font-size:17px;line-height:18px;margin-bottom:5px}
button{background:#3f4650;display:flex;align-items:center;justify-content:center;width:23px;padding-bottom:3px}
button:has(cad-icon){padding:0}
.on{width:73px;background:#52657f;font-weight:700;color:#fff}.s{width:80px}.p{width:47px;font-weight:700}`,
`${[['up','展开'],['first','第一个'],['prev','上一个'],['next','下一个'],['last','最后一个']].map(a=>`<button aria-label="${a[1]}">${ic(a[0],16)}</button>`).join('')}<button class="on">模型</button><button class="s">布局1</button><button class="p">+</button>`);

define('command-window',`:host{display:flex;height:223px;margin:1px 4px 0 1px;flex:none}
aside{width:26px;background:#444b59;margin-right:3px;padding:4px 0 0 6px}aside button{display:flex}aside cad-icon{opacity:.3}
.b{flex:1;background:#2b2e32;display:flex;flex-direction:column;min-width:0;color:#b4b7ba;font-family:"Liberation Mono","Noto Sans CJK SC",monospace;font-size:24px;font-weight:300}
.m{font-size:20px;white-space:pre}
.t{display:flex;height:192px;border-bottom:1px solid #505c67}
.g{flex:1;line-height:27px;height:190px;padding-top:1px}.g p{margin:0;height:27px}
label{display:flex;height:31px;line-height:27px;align-items:flex-start}
label span{padding-top:2px}
input{flex:1;height:28px}i{width:1px;height:26px;background:#e8e8e8;margin-left:14px}`,
`<aside><button aria-label="关闭">${ic('close',16)}</button></aside><div class="b"><div class="t"><div class="g">${['找到 1 个','命令:','命令: _.erase','找到 1 个','命令:','命令: _.erase','找到 1 个'].map(t=>`<p>${mix(t)}</p>`).join('')}</div><scroll-bar style="--before:127px;--thumb:12px"></scroll-bar></div><label><span>${mix('命令:')}</span><i></i><input aria-label="命令"></label></div>`);

define('panel-frame',`:host{display:flex;flex-direction:column;background:#434c57;border:3px solid #2b3038;border-bottom-width:1px;flex:none;min-height:0;overflow:hidden}
header{height:29px;background:#505c67;display:flex;align-items:center;justify-content:space-between;padding:0 10px 2px 12px;flex:none}
:host([wide]) header{padding-left:19px}
h2{margin:0;font-size:21px;line-height:27px;font-weight:700}header button{display:flex}`,
e=>`<header><h2>${e.getAttribute('title')}</h2><button aria-label="关闭">${ic('close',15)}</button></header><slot></slot>`);

const keys=a=>`<div class="k">${a.split(' ').map(t=>`<button>${t.replace('<','&lt;')}</button>`).join('')}</div>`;
define('calc-panel',`:host{display:flex;width:420px;flex:none;min-height:0}panel-frame{flex:1}
.w{display:flex;flex:1;min-height:0}.c{flex:1;padding:10px 7px 0 10px;min-width:0;overflow:hidden;font-size:18px}
.tools{display:flex;gap:6px;padding-left:5px}.tools tool-button{width:22px;height:22px;border:1px solid #9b9fa5}
.out,.in{display:block;width:100%;border:1px solid #62676d;background:none;resize:none}.out{height:112px;margin-top:22px;box-sizing:border-box}.in{height:28px;margin-top:5px}
h3{margin:18px 0 0 4px;font-size:21px;line-height:25px;height:28px;font-weight:700}h3.f{margin-top:10px}h3 span{font:18px/18px "Liberation Mono",monospace}
.k{display:grid;grid-template-columns:repeat(5,59px);gap:8px 12px;margin-left:12px}
.k button{height:28px;border:1px solid #a4a7ab;line-height:24px;padding-bottom:1px;text-align:center}
.v{display:flex;height:22px;margin-left:10px;gap:4px}.v tool-button{width:22px;height:22px}.v .on{border:1px solid #9b9fa5;margin-right:2px}
.tree{display:flex;border:1px solid #62676d;height:209px}
ul{list-style:none;margin:0;padding:0}.tree>ul{flex:1}
.rt{display:flex;align-items:center;height:25px;padding-left:5px;gap:4px}
li li{height:26px;display:flex;align-items:center;gap:5px;line-height:26px}
li ul{margin-left:30px;border-left:1px dotted #6c747d;padding-bottom:12px}li li:before{content:"";width:9px;border-top:1px dotted #6c747d;margin-right:-5px}li li cad-icon{margin:0 1px 0 2px}
.tree scroll-bar{width:25px}.sc{margin:30px 6px 0 0}`,
`<panel-frame title="计算器" wide><div class="w"><div class="c"><div class="tools">${tb('eraseY','清除')+tb('clock','清除历史')+tb('pastecmd','粘贴到命令行')+tb('pick','获取坐标')+tb('ruler','两点距离')+tb('angle','角度')+tb('cross','交点')+tb('help','帮助')}</div>
<textarea class="out" aria-label="历史记录" readonly></textarea><input class="in" aria-label="表达式">
<h3 class="f">数字键区<span>&lt;&lt;</span></h3>${keys('C <-- sqrt / 1/x 7 8 9 * x^2 4 5 6 + x^3 1 2 3 - x^y 0 . pi ( ) = MS M+ MR MC')}
<h3>科学<span>&lt;&lt;</span></h3>${keys('sin cos tan log 10^x asin acos atan ln e^x r2d d2r abs rnd trunc')}
<h3>变量<span>&lt;&lt;</span></h3>
<div class="v"><tool-button class="on" label="新建变量">${ic('varnew',14)}</tool-button>${tb('varedit','编辑变量')+tb('vardel','删除变量')+tb('vcalc','返回')}</div>
<div class="tree"><ul><li><div class="rt">${ic('minus',14)+ic('folder')}<span>变量样例</span></div><ul>${['Phi','dee','ille','mee','nee','rad'].map((t,i)=>`<li>${ic(i?'vx':'vk',14)}<span>${t}</span></li>`).join('')}</ul></li></ul><scroll-bar style="--thumb:109px"></scroll-bar></div>
</div><scroll-bar class="sc" style="--thumb:60px"></scroll-bar></div></panel-frame>`);

const line=w=>`<i class="ln" style="width:${w}px"></i>`;
const sect=(t,rows,c='')=>`<section><button class="h"><b>${t}</b><svg width="18" height="10"><path d="M0 0h18l-9 9z" fill="#e8eaec"/></svg></button><table class="${c}">${rows.map(r=>`<tr><th scope="row">${r[0]}</th><td>${r[1]}</td></tr>`).join('')}</table></section>`;
define('property-panel',`:host{display:flex;width:336px;flex:none;min-height:0;margin:0 2px}panel-frame{flex:1}
.s{display:flex;padding:8px 8px 0 9px;height:60px;flex:none}.q{position:relative;flex:1;height:30px;border-bottom:1px solid #56616c;margin-right:4px}
select{appearance:none;width:100%;height:33px;font-size:18px;padding-left:4px}option{background:#434c57}.q cad-icon{position:absolute;right:4px;top:5px}
.s tool-button{width:21px;height:21px;border:1px solid #56616c;margin-left:3px}.s tool-button:first-of-type{margin-left:0}
.w{display:flex;height:603px;padding:0 9px 0 8px;overflow:hidden;flex:none}.c{flex:1;overflow:hidden;margin-right:9px}
section{margin-bottom:25px}.h{display:flex;width:100%;height:36px;border-bottom:1px solid #f0f0f0;align-items:center;justify-content:space-between;font-size:18px;padding:2px 8px 0 5px}
.h svg{margin-top:6px}
table{width:100%;border-collapse:collapse;font-size:18px}tr{border-bottom:1px solid #55606b;height:36px}
th{font-weight:400;text-align:left;width:108px;padding:3px 0 0 5px;border-right:1px solid #55606b;line-height:26px;white-space:nowrap}
td{padding:0 0 2px 4px;line-height:26px;white-space:nowrap}.d td{color:#989da3;font-size:19px}
.ln{display:inline-block;height:1px;background:#f0f0f0;vertical-align:middle;margin-right:4px}
.sw{display:inline-block;width:15px;height:15px;border:1px solid #111;background:#0f0;vertical-align:-1px;margin-right:3px}`,
`<panel-frame title="特性"><div class="s"><div class="q"><select aria-label="选择"><option>无选择</option></select>${ic('down',18)}</div>${tb('qsel','快速选择')+tb('psel','选择对象')+tb('tog','切换 PICKADD')}</div>
<div class="w"><div class="c">${sect('基本',[['颜色','<i class="sw"></i>绿'],['图层','虚线'],['线型',line(45)+'随层'],['线型比例','1'],['线宽',line(40)+'随层'],['透明度','ByLayer'],['厚度','0']])}${sect('视图',[['中心点 X','74801.6666'],['中心点 Y','-8411.5822'],['中心点 Z','0'],['高度','9432.8326'],['宽度','24100.0695']],'d')}${sect('其他',[['注释比例','1:1']])}</div><scroll-bar style="--thumb:385px"></scroll-bar></div></panel-frame>`);

define('status-bar',`:host{display:flex;height:27px;flex:none;background:#323943;align-items:center}
output{display:block;font:15px/19px "Liberation Mono",monospace;white-space:pre;margin:0 1px 0 10px;width:373px;border-bottom:1px solid #4a525d;height:25px;padding:5px 0 0 1px}
.i,.r{display:flex;align-items:center}.i tool-button{width:20px;height:20px;margin:2px 2px 0}
.r{margin-left:auto;padding-right:3px}.r tool-button{width:23px}.r button{display:flex;align-items:center;color:#9a9ea4;font:15px "Liberation Mono",monospace;gap:8px;margin-right:8px;padding-bottom:3px}`,
`<output>66914.4163, -4045.7103, 0.0000</output><div class="i">${'snap grid ortho polar* osnap* otrack* dyn* dynin* lwt trans* cycle quick*'.split(' ').map(n=>`<tool-button label="${n.replace('*','')}" ${n.endsWith('*')?'on':''}>${ic(n.replace('*',''),16)}</tool-button>`).join('')}</div>
<div class="r">${tb('ann','注释比例')}<button>1:1 <svg width="14" height="6"><path d="M0 0h14l-7 6z" fill="#fff"/></svg></button>${tb('annv','注释可见性')+tb('anna','自动缩放')+tb('work','工作空间')+tb('gear','设置')+tb('full','全屏')+tb('burger','菜单')}</div>`);
define('task-strip',`:host{display:flex;height:11px;background:#03151b;overflow:hidden;flex:none;justify-content:space-between;font:18px/20px "Noto Sans CJK SC",sans-serif;color:#fff}
i{width:71px;background:#2c3b40;margin-left:824px;border-right:1px solid #566}time{padding:4px 40px 0 0;border-right:1px solid #6b7478;margin-right:6px}`,'<i></i><time>18:26</time>');

define('cad-app',`:host{display:flex;flex-direction:column;height:100vh}
main{flex:1;display:flex;min-height:0;padding-top:1px;border-top:1px solid #2a2f37}
.left{flex:1;display:flex;flex-direction:column;min-width:0;padding-top:1px}
.work{flex:1;display:flex;min-height:0;padding-right:4px}
.doc{flex:1;display:flex;flex-direction:column;min-width:0;margin:0 2px}
doc-tabs{margin-top:1px}side-bar{padding-top:1px}`,
`<menu-bar></menu-bar><std-toolbars></std-toolbars>
<main><div class="left"><div class="work"><side-bar sets="line xline pline polygon rect arc circle cloud spline ellipse ellarc insert block points hatch region table mtext"></side-bar>
<div class="doc"><doc-tabs></doc-tabs><drawing-view></drawing-view><layout-tabs></layout-tabs></div>
<side-bar sets="erase copyobj mirror offset array move rotate scale stretch trim extend brkpt brk join chamfer fillet explode match|front back above below hatchb"></side-bar></div>
<command-window></command-window></div><calc-panel></calc-panel><property-panel></property-panel></main>
<status-bar></status-bar><task-strip></task-strip>`);
</script>
</body>
</html>
